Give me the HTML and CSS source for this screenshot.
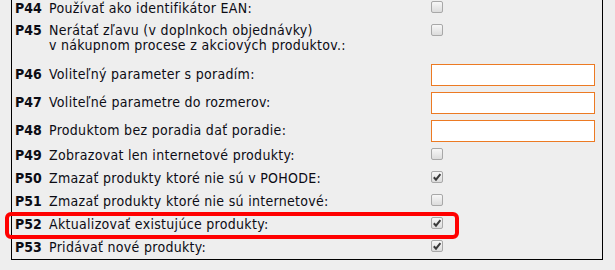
FILE: index.html
```html
<!DOCTYPE html>
<html lang="sk">
<head>
<meta charset="utf-8">
<title>Nastavenia</title>
<link rel="stylesheet" href="styles.css">
</head>
<body>
<div class="form">
  <div class="row check">
    <span class="code">P44</span><span class="label">Používať ako identifikátor EAN:</span>
    <span class="value"><span class="cb"></span></span>
  </div>
  <div class="row tall">
    <span class="code">P45</span><span class="label">Nerátať zľavu (v doplnkoch objednávky)<br>v nákupnom procese z akciových produktov.:</span>
    <span class="value"><span class="cb"></span></span>
  </div>
  <div class="row field">
    <span class="code">P46</span><span class="label">Voliteľný parameter s poradím:</span>
    <span class="value"><span class="input"></span></span>
  </div>
  <div class="row field">
    <span class="code">P47</span><span class="label">Voliteľné parametre do rozmerov:</span>
    <span class="value"><span class="input"></span></span>
  </div>
  <div class="row field">
    <span class="code">P48</span><span class="label">Produktom bez poradia dať poradie:</span>
    <span class="value"><span class="input"></span></span>
  </div>
  <div class="row check">
    <span class="code">P49</span><span class="label">Zobrazovat len internetové produkty:</span>
    <span class="value"><span class="cb"></span></span>
  </div>
  <div class="row check">
    <span class="code">P50</span><span class="label">Zmazať produkty ktoré nie sú v POHODE:</span>
    <span class="value"><span class="cb on"><svg viewBox="0 0 10 10"><path d="M1.8 5.2 L4 7.6 L8.4 2.2"/></svg></span></span>
  </div>
  <div class="row check">
    <span class="code">P51</span><span class="label">Zmazať produkty ktoré nie sú internetové:</span>
    <span class="value"><span class="cb"></span></span>
  </div>
  <div class="row check marked">
    <span class="code">P52</span><span class="label">Aktualizovať existujúce produkty:</span>
    <span class="value"><span class="cb on"><svg viewBox="0 0 10 10"><path d="M1.8 5.2 L4 7.6 L8.4 2.2"/></svg></span></span>
    <span class="highlight"></span>
  </div>
  <div class="row check">
    <span class="code">P53</span><span class="label">Pridávať nové produkty:</span>
    <span class="value"><span class="cb on"><svg viewBox="0 0 10 10"><path d="M1.8 5.2 L4 7.6 L8.4 2.2"/></svg></span></span>
  </div>
</div>
</body>
</html>
```
FILE: styles.css
```css
html, body {
  margin: 0;
  background: #eeeeee;
}
body {
  font-family: "DejaVu Sans Condensed", "DejaVu Sans", sans-serif;
  font-stretch: condensed;
  font-size: 14px;
  line-height: 15px;
  color: #0c0c14;
}
.form {
  margin: -4px 0 0 11px;
  width: 590px;
  border: 1px solid #000;
}
.row {
  display: grid;
  grid-template-columns: 34px 382px 1fr;
  padding-left: 3px;
  align-items: center;
  position: relative;
}
.row.check { height: 23px; }
.row.field { height: 28px; }
.row.tall {
  height: 40px;
  align-items: start;
}
.row.tall .code,
.row.tall .label { padding-top: 3px; }
.code { font-weight: bold; }
.label { letter-spacing: 0.3px; }
.value {
  align-self: start;
  padding-top: 4px;
  display: flex;
}
.cb {
  width: 10px;
  height: 10px;
  border: 1px solid #a8a8a8;
  border-radius: 2px;
  background: linear-gradient(#f7f7f7, #dcdcdc);
  display: flex;
}
.cb svg {
  width: 10px;
  height: 10px;
}
.cb path {
  fill: none;
  stroke: #3a3a3a;
  stroke-width: 2;
}
.input {
  width: 162px;
  height: 20px;
  border: 1px solid #ec7a23;
  background: #fff;
}
.highlight {
  position: absolute;
  left: -7px;
  top: -1px;
  width: 446px;
  height: 19px;
  border: 4px solid #ff0000;
  border-radius: 6px;
}
```
